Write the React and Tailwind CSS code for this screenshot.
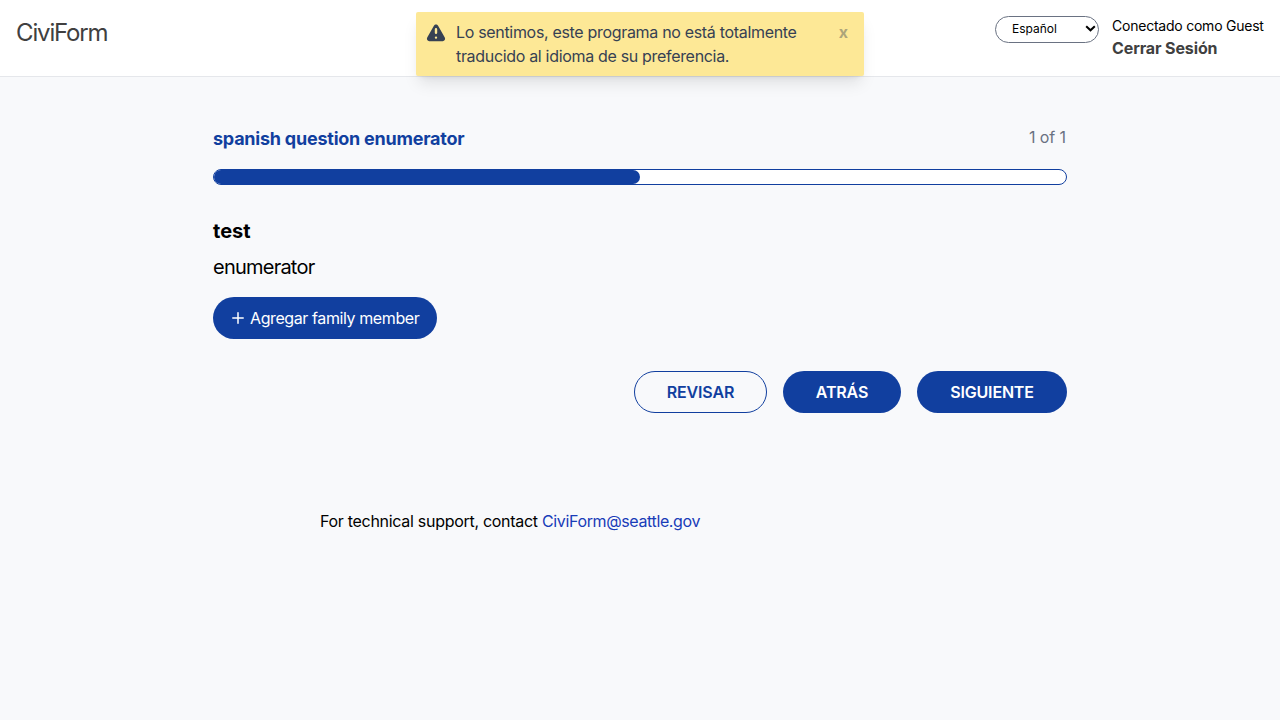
function WarningIcon() {
  return (
    <svg className="h-6 w-6 shrink-0" viewBox="0 0 20 20" fill="currentColor" aria-hidden="true">
      <path
        fillRule="evenodd"
        clipRule="evenodd"
        d="M8.257 3.099c.765-1.36 2.722-1.36 3.486 0l5.58 9.92c.75 1.334-.213 2.98-1.742 2.98H4.42c-1.53 0-2.493-1.646-1.743-2.98l5.58-9.92zM11 13a1 1 0 11-2 0 1 1 0 012 0zm-1-8a1 1 0 00-1 1v3a1 1 0 002 0V6a1 1 0 00-1-1z"
      />
    </svg>
  );
}

function Toast() {
  return (
    <div className="absolute left-1/2 top-3 flex h-16 w-[448px] -translate-x-1/2 rounded-xs bg-[#fde896] text-gray-700 shadow-lg">
      <div className="pl-2 pt-2.5">
        <WarningIcon />
      </div>
      <p className="pl-2 pt-2 text-base leading-6 tracking-[-0.32px] whitespace-nowrap">
        Lo sentimos, este programa no está totalmente
        <br />
        traducido al idioma de su preferencia.
      </p>
      <button className="mr-4 ml-auto h-6 mt-2 font-bold opacity-40">x</button>
    </div>
  );
}

function Header() {
  return (
    <header className="relative flex h-[77px] border-b border-gray-200 bg-white px-4">
      <div className="pt-[17px] text-2xl leading-8 tracking-[-1.15px] text-[#404040]">CiviForm</div>
      <div className="ml-auto flex pt-4">
        <div className="relative mr-[13px] -mt-px h-[27px] w-26">
          <select className="h-full w-full appearance-none rounded-full border border-gray-500 bg-white pl-4 text-xs text-black">
            <option>Español</option>
          </select>
          <svg className="pointer-events-none absolute top-[10px] right-[3px] h-[7px] w-[11px]" viewBox="0 0 11 7" fill="none" stroke="#000" strokeWidth="2">
            <path d="M1.2 1.2 5.5 5.3 9.8 1.2" />
          </svg>
        </div>
        <div className="w-[152px] whitespace-nowrap">
          <div className="text-sm leading-5 tracking-[-0.23px] text-black">Conectado como Guest</div>
          <a className="block text-base leading-6 font-bold tracking-[-0.12px] text-[#404040]">Cerrar Sesión</a>
        </div>
      </div>
      <Toast />
    </header>
  );
}

export default function App() {
  return (
    <div className="min-h-screen bg-[#f8f9fb] font-['Inter',sans-serif] text-black">
      <Header />
      <main className="mx-auto w-[854px] pt-12">
        <div className="flex justify-between">
          <h2 className="text-lg leading-7 font-bold tracking-[-0.23px] text-[#113f9f]">spanish question enumerator</h2>
          <div className="mr-px text-base leading-6 tracking-[-0.1px] text-gray-500">1 of 1</div>
        </div>
        <div className="mt-4 h-4 rounded-full border border-[#113f9f] bg-white">
          <div className="h-full w-1/2 rounded-full bg-[#113f9f]" />
        </div>
        <h1 className="mt-8 text-xl leading-7 font-bold">test</h1>
        <p className="mt-2 text-xl leading-7 tracking-[-0.77px]">enumerator</p>
        <button className="mt-4 flex h-[42px] w-56 items-center rounded-full bg-[#113f9f] pl-[19px] text-base whitespace-nowrap text-white">
          <svg className="mr-1.5 h-3 w-3" viewBox="0 0 12 12" stroke="currentColor" strokeWidth="1.5" strokeLinecap="round">
            <path d="M6 .8v10.4M.8 6h10.4" />
          </svg>
          <span className="tracking-[-0.4px]">Agregar family member</span>
        </button>
        <div className="mt-8 flex justify-end gap-4 text-base font-semibold tracking-[-0.17px]">
          <button className="h-[42px] w-[133px] rounded-full border border-[#113f9f] text-[#113f9f]">REVISAR</button>
          <button className="h-[42px] w-[118px] rounded-full bg-[#113f9f] text-white">ATRÁS</button>
          <button className="h-[42px] w-[150px] rounded-full bg-[#113f9f] text-white">SIGUIENTE</button>
        </div>
      </main>
      <footer className="mx-auto mt-24 w-[640px] text-base leading-6">
        <span className="tracking-[-0.29px]">For technical support, contact </span>
        <a className="tracking-[-0.37px] text-blue-800">CiviForm@seattle.gov</a>
      </footer>
    </div>
  );
}
